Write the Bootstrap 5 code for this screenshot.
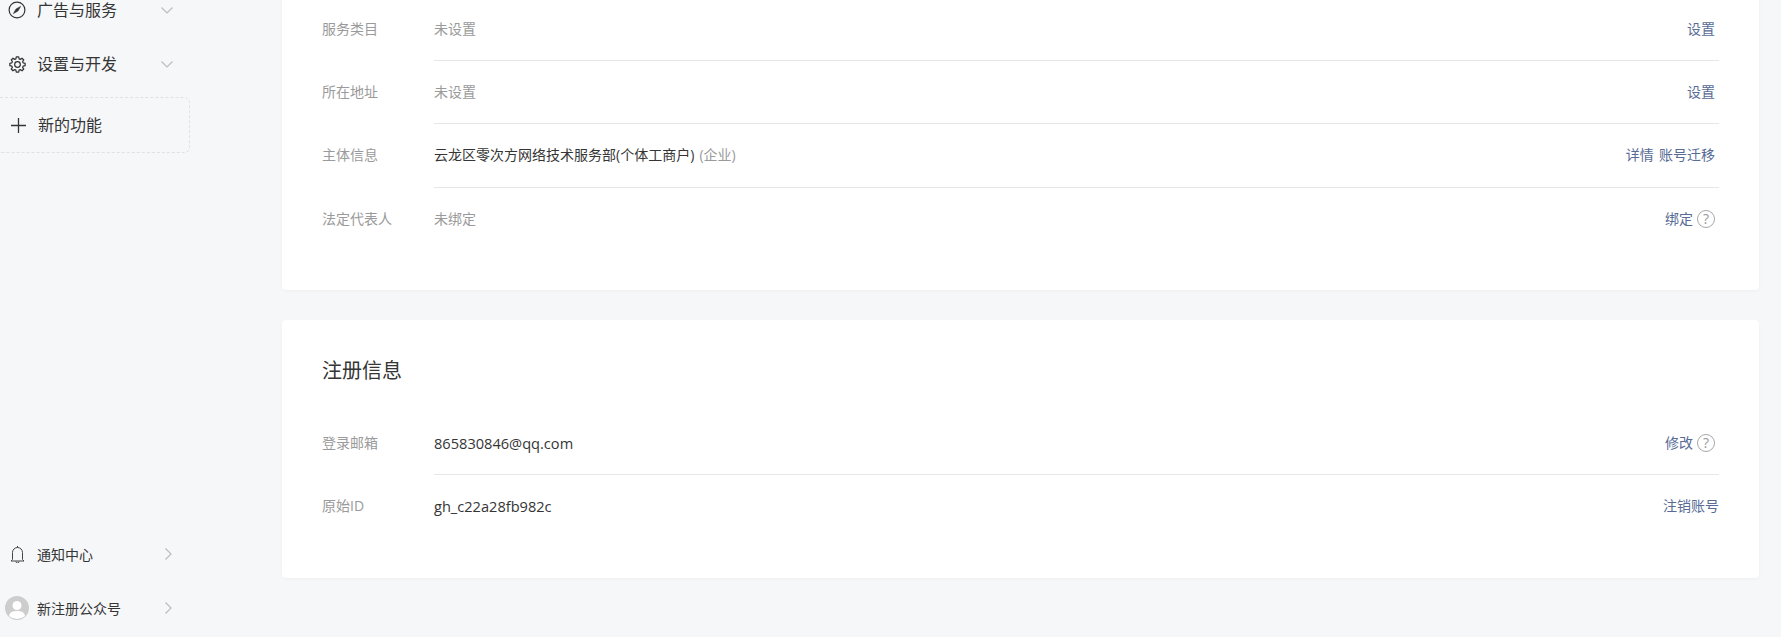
<!DOCTYPE html>
<html lang="zh-CN">
<head>
<meta charset="utf-8">
<title>账号详情</title>
<link href="https://cdn.jsdelivr.net/npm/bootstrap@5.3.0/dist/css/bootstrap.min.css" rel="stylesheet">
<style>
html,body{height:637px;overflow:hidden}
body{background:#f6f7f9;color:#353535;font-family:"Open Sans","Noto Sans CJK SC",sans-serif;font-size:14px}
.page-shell{height:637px}
.side-col{width:282px;flex:none;height:637px}
.side-item{height:54px;color:#353535}
.side-ico{width:34px;flex:none;display:flex;justify-content:center}
.side-top{margin-top:-17px}
.side-label-lg{font-size:16px;margin-left:3px;width:124px}
.side-label-sm{font-size:14px;margin-left:3px;width:128px}
.new-box{width:190px;height:56px;margin-top:6px;border:1px dashed #e0e1e4;border-left:0;border-radius:0 6px 6px 0;font-size:16px}
.new-box .side-ico svg{margin-left:2px}
.new-box .side-label-lg{margin-left:4px}
.side-foot{padding-bottom:2px}
.main-col{width:1477px;flex:none;margin-top:-2px}
.panel{background:#fff;border-radius:4px;box-shadow:0 1px 3px rgba(0,0,0,.04);padding:0 40px 40px}
.panel-second{margin-top:30px;padding-top:37px;padding-bottom:41px}
.panel-first{border-radius:0 0 4px 4px;height:292px}
.panel-title{font-size:20px;font-weight:400;line-height:28px;margin:0 0 27px;color:#353535}
.info-label{width:112px;flex:none;color:#9a9a9a;padding-top:20px;line-height:22px}
.info-body{padding:20px 0;line-height:22px;border-bottom:1px solid #e7e7eb;color:#353535;word-spacing:1.5px}
.info-row:last-child .info-body{border-bottom:0}
.info-tall .info-body{padding-bottom:21px}
.muted-val{color:#9a9a9a}
.latin-val{font-size:14.6px}
.act{color:#576b95;text-decoration:none;padding-right:4px}
.act-flush{padding-right:0}
.act-wrap{display:inline-flex;align-items:center;height:22px;padding-right:4px}
.help-ico{display:inline-flex;width:18px;height:18px;border:1px solid #a8a8a8;border-radius:50%;align-items:center;justify-content:center;color:#999;font-size:14px;line-height:1;margin-left:4px}
</style>
</head>
<body>
<div class="page-shell d-flex">
  <aside class="side-col d-flex flex-column">
    <div class="side-top">
      <div class="side-item d-flex align-items-center">
        <span class="side-ico"><svg width="18" height="18" viewBox="0 0 18 18" fill="none" stroke="#353535" stroke-width="1.2"><circle cx="9" cy="9" r="7.9"/><path d="M12.600 5.400 10 10 5.400 12.600 8 8Z" fill="#353535" stroke-width=".6"/></svg></span>
        <span class="side-label-lg">广告与服务</span>
        <svg width="12" height="7" viewBox="0 0 12 7" fill="none" stroke="#bdbdbd" stroke-width="1.2"><path d="M.5.5 6 6 11.500.5"/></svg>
      </div>
      <div class="side-item d-flex align-items-center">
        <span class="side-ico"><svg width="17" height="17" viewBox="-9 -9 18 18" fill="none" stroke="#353535" stroke-width="1.3"><polygon stroke-linejoin="round" points="-1.71,-5.96 -1.28,-8.1 1.28,-8.1 1.71,-5.96 3,-5.42 4.82,-6.63 6.63,-4.82 5.42,-3 5.96,-1.71 8.1,-1.28 8.1,1.28 5.96,1.71 5.42,3 6.63,4.82 4.82,6.63 3,5.42 1.71,5.96 1.28,8.1 -1.28,8.1 -1.71,5.96 -3,5.42 -4.82,6.63 -6.63,4.82 -5.42,3 -5.96,1.71 -8.1,1.28 -8.1,-1.28 -5.96,-1.71 -5.42,-3 -6.63,-4.82 -4.82,-6.63 -3,-5.42"/><circle r="3"/></svg></span>
        <span class="side-label-lg">设置与开发</span>
        <svg width="12" height="7" viewBox="0 0 12 7" fill="none" stroke="#bdbdbd" stroke-width="1.2"><path d="M.5.5 6 6 11.500.5"/></svg>
      </div>
      <div class="new-box d-flex align-items-center">
        <span class="side-ico"><svg width="15" height="15" viewBox="0 0 15 15" fill="none" stroke="#353535" stroke-width="1.3"><path d="M7.500 0v15M0 7.500h15"/></svg></span>
        <span class="side-label-lg">新的功能</span>
      </div>
    </div>
    <div class="side-foot mt-auto">
      <div class="side-item d-flex align-items-center">
        <span class="side-ico"><svg width="15" height="17" viewBox="0 0 15 17" fill="none" stroke="#444" stroke-width="1"><path d="M2.500 13.500V6.500a5 5 0 0 1 10 0v7l1.500 1.500H1z"/><path d="M6 15.500a1.500 1.500 0 0 0 3 0M7.500 0v1.500"/></svg></span>
        <span class="side-label-sm">通知中心</span>
        <svg width="7" height="12" viewBox="0 0 7 12" fill="none" stroke="#bdbdbd" stroke-width="1.2"><path d="M.5.500 6 6 .5 11.500"/></svg>
      </div>
      <div class="side-item d-flex align-items-center">
        <span class="side-ico"><svg width="24" height="24" viewBox="0 0 24 24"><circle cx="12" cy="12" r="12" fill="#cdcdcd"/><circle cx="12" cy="9.500" r="4.500" fill="#fff"/><path d="M4 20c.6-3.800 3.800-5 8-5s7.400 1.200 8 5a12 12 0 0 1-16 0z" fill="#fff"/></svg></span>
        <span class="side-label-sm">新注册公众号</span>
        <svg width="7" height="12" viewBox="0 0 7 12" fill="none" stroke="#bdbdbd" stroke-width="1.2"><path d="M.5.500 6 6 .5 11.500"/></svg>
      </div>
    </div>
  </aside>
  <main class="main-col">
    <section class="panel panel-first">
      <div class="info-row d-flex">
        <div class="info-label">服务类目</div>
        <div class="info-body flex-grow-1 d-flex justify-content-between"><span class="muted-val">未设置</span><a class="act" href="#">设置</a></div>
      </div>
      <div class="info-row d-flex">
        <div class="info-label">所在地址</div>
        <div class="info-body flex-grow-1 d-flex justify-content-between"><span class="muted-val">未设置</span><a class="act" href="#">设置</a></div>
      </div>
      <div class="info-row info-tall d-flex">
        <div class="info-label">主体信息</div>
        <div class="info-body flex-grow-1 d-flex justify-content-between"><span>云龙区零次方网络技术服务部(个体工商户) <span class="muted-val">(企业)</span></span><a class="act" href="#">详情 账号迁移</a></div>
      </div>
      <div class="info-row d-flex">
        <div class="info-label">法定代表人</div>
        <div class="info-body flex-grow-1 d-flex justify-content-between"><span class="muted-val">未绑定</span><span class="act-wrap"><a class="act act-flush" href="#">绑定</a><span class="help-ico">?</span></span></div>
      </div>
    </section>
    <section class="panel panel-second">
      <h2 class="panel-title">注册信息</h2>
      <div class="info-row d-flex">
        <div class="info-label">登录邮箱</div>
        <div class="info-body flex-grow-1 d-flex justify-content-between"><span class="latin-val">865830846@qq.com</span><span class="act-wrap"><a class="act act-flush" href="#">修改</a><span class="help-ico">?</span></span></div>
      </div>
      <div class="info-row d-flex">
        <div class="info-label">原始ID</div>
        <div class="info-body flex-grow-1 d-flex justify-content-between"><span class="latin-val">gh_c22a28fb982c</span><a class="act act-flush" href="#">注销账号</a></div>
      </div>
    </section>
  </main>
</div>
<script src="https://cdn.jsdelivr.net/npm/bootstrap@5.3.0/dist/js/bootstrap.bundle.min.js"></script>
</body>
</html>
